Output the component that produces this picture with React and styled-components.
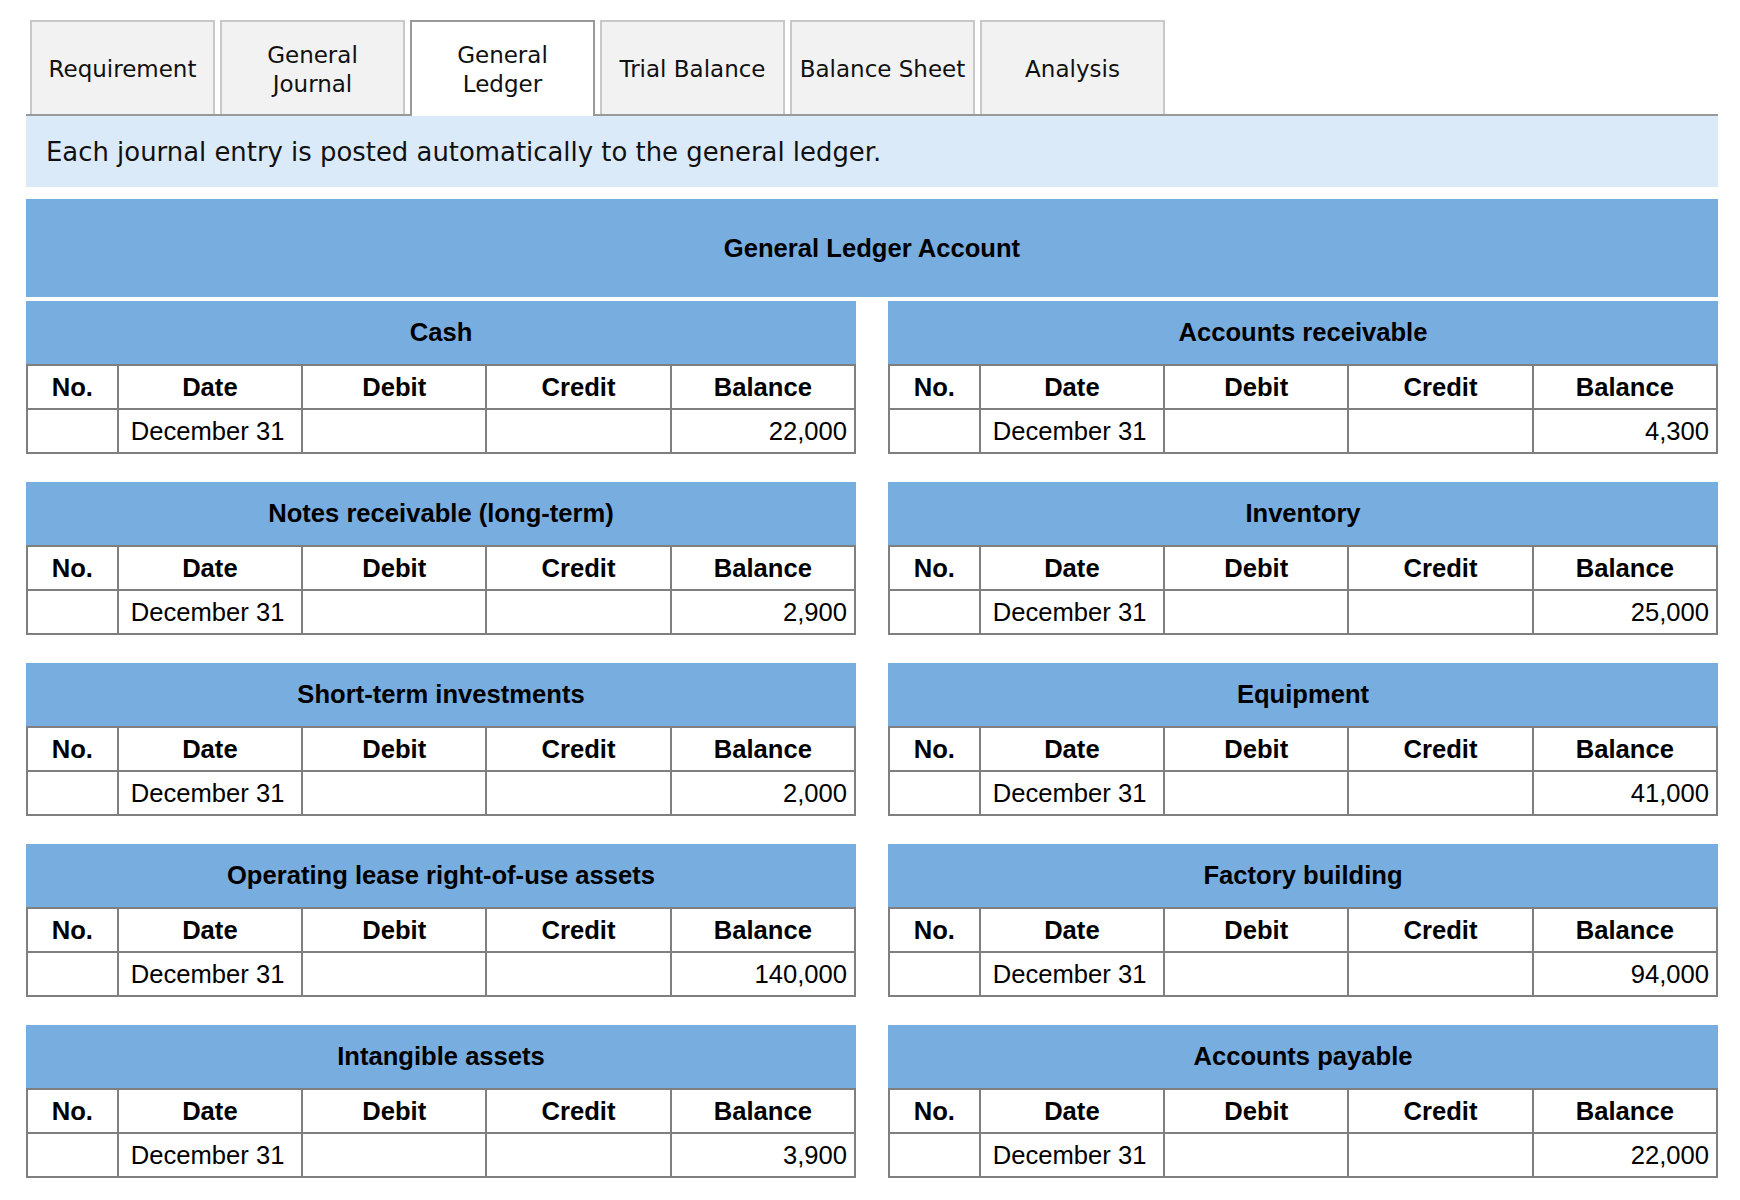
import React from "react";
import styled, { createGlobalStyle } from "styled-components";

const GlobalStyle = createGlobalStyle`
  html, body { margin: 0; padding: 0; background: #ffffff; }
  body { font-family: "Liberation Sans", Arial, sans-serif; color: #000; }
`;

const Page = styled.div`
  padding: 20px 22px 20px 26px;
  width: 1692px;
`;

const TabBar = styled.div`
  display: flex;
  gap: 5px;
  padding-left: 4px;
  border-bottom: 2px solid #999999;
  height: 94px;
  box-sizing: content-box;
`;

const Tab = styled.div`
  box-sizing: border-box;
  width: 185px;
  height: ${(p) => (p.$active ? "96px" : "94px")};
  margin-bottom: ${(p) => (p.$active ? "-2px" : "0")};
  padding: ${(p) => (p.$active ? "3px 0 2px" : "3px 0 0")};
  border: 2px solid ${(p) => (p.$active ? "#999999" : "#c8c8c8")};
  border-bottom: none;
  background: ${(p) => (p.$active ? "#ffffff" : "#f2f2f2")};
  display: flex;
  align-items: center;
  justify-content: center;
  text-align: center;
  font-family: "DejaVu Sans", Verdana, sans-serif;
  font-size: 23px;
  line-height: 29px;
  color: #111111;
  white-space: nowrap;
  position: relative;
  z-index: ${(p) => (p.$active ? 1 : 0)};
`;

const InfoBar = styled.div`
  height: 71px;
  background: #dbeaf8;
  display: flex;
  align-items: center;
  padding-left: 20px;
  font-family: "DejaVu Sans", Verdana, sans-serif;
  font-size: 25.9px;
  color: #111111;
`;

const LedgerTitle = styled.div`
  margin-top: 12px;
  height: 98px;
  background: #78ade0;
  display: flex;
  align-items: center;
  justify-content: center;
  font-weight: bold;
  font-size: 25.6px;
`;

const AccountGrid = styled.div`
  margin-top: 4px;
  display: grid;
  grid-template-columns: 1fr 1fr;
  column-gap: 32px;
  row-gap: 28px;
`;

const Account = styled.div`
  display: flex;
  flex-direction: column;
`;

const AccountName = styled.div`
  height: 63px;
  background: #78ade0;
  display: flex;
  align-items: center;
  justify-content: center;
  font-weight: bold;
  font-size: 25.6px;
`;

const Table = styled.table`
  width: 100%;
  border-collapse: collapse;
  table-layout: fixed;
  font-size: 25.6px;
`;

const Row = styled.tr`
  height: 44px;
`;

const HeadCell = styled.th`
  border: 2px solid #7f7f7f;
  padding: 0;
  font-weight: bold;
  text-align: center;
`;

const Cell = styled.td`
  border: 2px solid #7f7f7f;
  padding: ${(p) => (p.$align === "right" ? "0 7px 0 0" : "0 0 0 12px")};
  text-align: ${(p) => p.$align || "left"};
  white-space: nowrap;
`;

const tabs = [
  ["Requirement"],
  ["General", "Journal"],
  ["General", "Ledger"],
  ["Trial Balance"],
  ["Balance Sheet"],
  ["Analysis"],
];

const accounts = [
  ["Cash", "22,000"],
  ["Accounts receivable", "4,300"],
  ["Notes receivable (long-term)", "2,900"],
  ["Inventory", "25,000"],
  ["Short-term investments", "2,000"],
  ["Equipment", "41,000"],
  ["Operating lease right-of-use assets", "140,000"],
  ["Factory building", "94,000"],
  ["Intangible assets", "3,900"],
  ["Accounts payable", "22,000"],
];

function LedgerAccount({ name, balance }) {
  return (
    <Account>
      <AccountName>{name}</AccountName>
      <Table>
        <colgroup>
          <col style={{ width: "10.96%" }} />
          <col />
          <col />
          <col />
          <col />
        </colgroup>
        <thead>
          <Row>
            <HeadCell>No.</HeadCell>
            <HeadCell>Date</HeadCell>
            <HeadCell>Debit</HeadCell>
            <HeadCell>Credit</HeadCell>
            <HeadCell>Balance</HeadCell>
          </Row>
        </thead>
        <tbody>
          <Row>
            <Cell />
            <Cell>December 31</Cell>
            <Cell />
            <Cell />
            <Cell $align="right">{balance}</Cell>
          </Row>
        </tbody>
      </Table>
    </Account>
  );
}

export default function App() {
  return (
    <>
      <GlobalStyle />
      <Page>
        <TabBar>
          {tabs.map((lines) => {
            const label = lines.join(" ");
            return (
              <Tab key={label} $active={label === "General Ledger"}>
                <span>
                  {lines.map((l, i) => (
                    <React.Fragment key={l}>
                      {i > 0 && <br />}
                      {l}
                    </React.Fragment>
                  ))}
                </span>
              </Tab>
            );
          })}
        </TabBar>
        <InfoBar>Each journal entry is posted automatically to the general ledger.</InfoBar>
        <LedgerTitle>General Ledger Account</LedgerTitle>
        <AccountGrid>
          {accounts.map(([name, bal]) => (
            <LedgerAccount key={name} name={name} balance={bal} />
          ))}
        </AccountGrid>
      </Page>
    </>
  );
}
